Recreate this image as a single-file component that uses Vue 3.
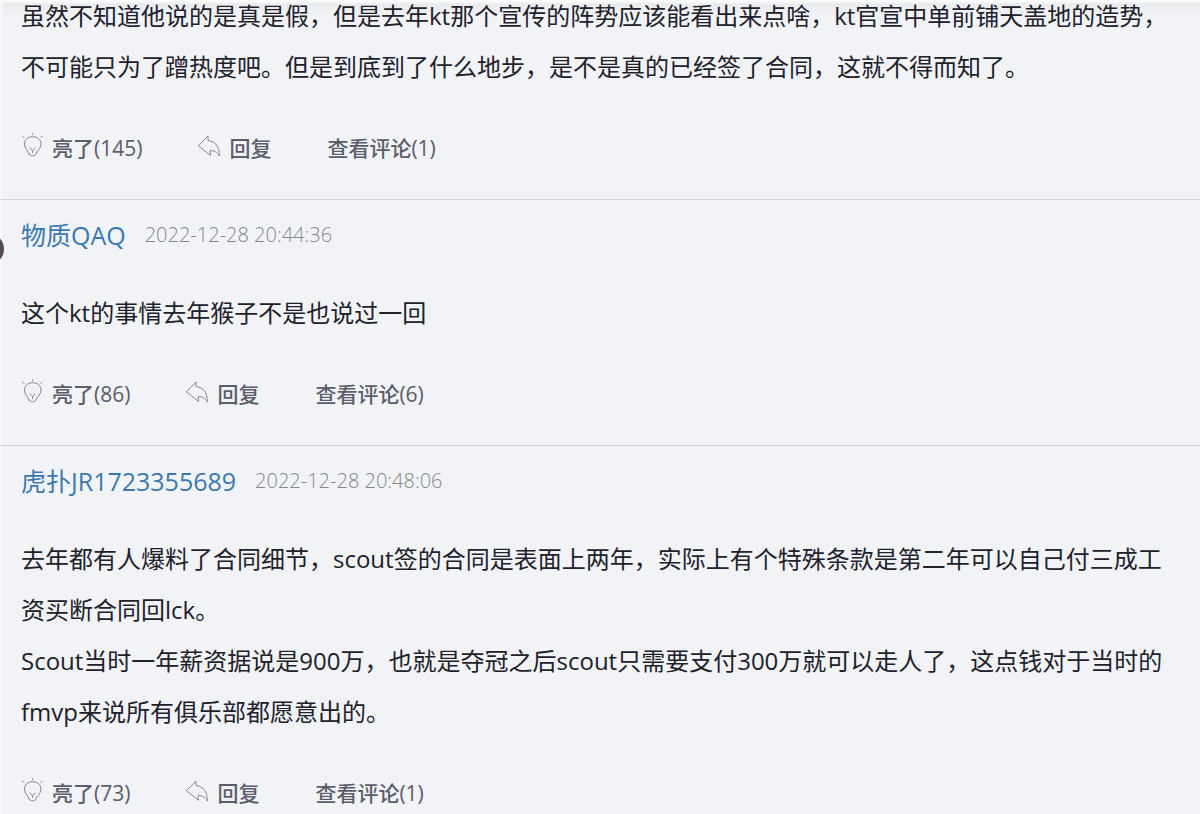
<script setup>
const comments = [
  {
    id: 1,
    paragraphs: [
      '虽然不知道他说的是真是假，但是去年kt那个宣传的阵势应该能看出来点啥，kt官宣中单前铺天盖地的造势，不可能只为了蹭热度吧。但是到底到了什么地步，是不是真的已经签了合同，这就不得而知了。',
    ],
    likes: 145,
    replies: 1,
  },
  {
    id: 2,
    author: '物质QAQ',
    time: '2022-12-28 20:44:36',
    avatar: true,
    paragraphs: ['这个kt的事情去年猴子不是也说过一回'],
    likes: 86,
    replies: 6,
  },
  {
    id: 3,
    author: '虎扑JR1723355689',
    time: '2022-12-28 20:48:06',
    paragraphs: [
      '去年都有人爆料了合同细节，scout签的合同是表面上两年，实际上有个特殊条款是第二年可以自己付三成工资买断合同回lck。',
      'Scout当时一年薪资据说是900万，也就是夺冠之后scout只需要支付300万就可以走人了，这点钱对于当时的fmvp来说所有俱乐部都愿意出的。',
    ],
    likes: 73,
    replies: 1,
  },
]
</script>

<template>
  <main class="thread">
    <div class="list">
      <article v-for="c in comments" :key="c.id" class="comment">
        <span v-if="c.avatar" class="avatar" aria-hidden="true"></span>
        <header v-if="c.author" class="head">
          <a class="author" href="#">{{ c.author }}</a>
          <time class="time">{{ c.time }}</time>
        </header>
        <div class="body">
          <p v-for="(p, i) in c.paragraphs" :key="i">{{ p }}</p>
        </div>
        <footer class="actions">
          <button type="button" class="action">
            <svg class="icon" viewBox="0 0 22 26" aria-hidden="true">
              <path d="M8 21C7.500 18 3.500 16 3.500 11C3.500 6.500 7 3.700 11.500 3.700S20 6.500 20 11C20 16 15.500 18 15 21C14.500 23.300 8.500 23.300 8 21Z" />
              <path d="M9 15L11.500 17.500L14 15M11.500 17.500V19.500M11.500 .8V1.800M1.500 3L3 4.500M21.500 3L20 4.500" />
            </svg>
            <span>亮了({{ c.likes }})</span>
          </button>
          <button type="button" class="action">
            <svg class="icon" viewBox="0 0 22 26" aria-hidden="true">
              <path d="M.7 12.500L10 3V7.500C17 8.500 21.500 13 21.300 23C19.500 19 16 17.500 12 17.500L12.500 22Z" />
            </svg>
            <span>回复</span>
          </button>
          <button type="button" class="action">查看评论({{ c.replies }})</button>
        </footer>
      </article>
    </div>
  </main>
</template>

<style>
body {
  margin: 0;
  background: #f1f3f7;
}
</style>

<style scoped>
.thread {
  position: relative;
  box-sizing: border-box;
  height: 100vh;
  overflow: hidden;
  background: #f1f3f7;
  font-family: "Open Sans", "Noto Sans CJK SC", sans-serif;
  color: #20212b;
}
.thread::before {
  content: "";
  position: absolute;
  inset: 0 0 auto;
  height: 16px;
  background: linear-gradient(#fbfcfc 0, #f8f9fa 2px, #e9ebed 4px, #f1f3f7 16px);
}
.thread::after {
  content: "";
  position: absolute;
  inset: 0 auto 0 0;
  width: 3px;
  background: linear-gradient(90deg, #f9fafc, #f1f3f7);
}
.list {
  position: relative;
  z-index: 1;
  margin-top: -10px;
}
.comment {
  position: relative;
  padding: 17px 26px 36px 21px;
  border-bottom: 1px solid #d3d6db;
}
.comment:first-child {
  padding-top: 0;
}
.avatar {
  position: absolute;
  left: -28px;
  top: 33px;
  width: 32px;
  height: 32px;
  border-radius: 50%;
  background: #554b50;
}
.head {
  display: flex;
  align-items: center;
  gap: 19px;
  margin-bottom: 34px;
  line-height: 36px;
}
.author {
  font-size: 25px;
  color: #3b79b0;
  text-decoration: none;
}
.time {
  font-size: 20px;
  font-weight: 300;
  color: #85878e;
}
.body p {
  margin: 0;
  font-size: 24px;
  line-height: 51px;
}
.actions {
  display: flex;
  align-items: center;
  gap: 56px;
  margin-top: 41px;
}
.action {
  display: flex;
  align-items: center;
  gap: 9px;
  padding: 0;
  border: 0;
  background: none;
  font: 500 21px/30px "Open Sans", "Noto Sans CJK SC", sans-serif;
  color: #5b5d6a;
  cursor: pointer;
}
.icon {
  width: 22px;
  height: 26px;
  margin-bottom: 4px;
  fill: none;
  stroke: #858890;
  stroke-width: 1;
  stroke-linecap: round;
  stroke-linejoin: round;
}
</style>
